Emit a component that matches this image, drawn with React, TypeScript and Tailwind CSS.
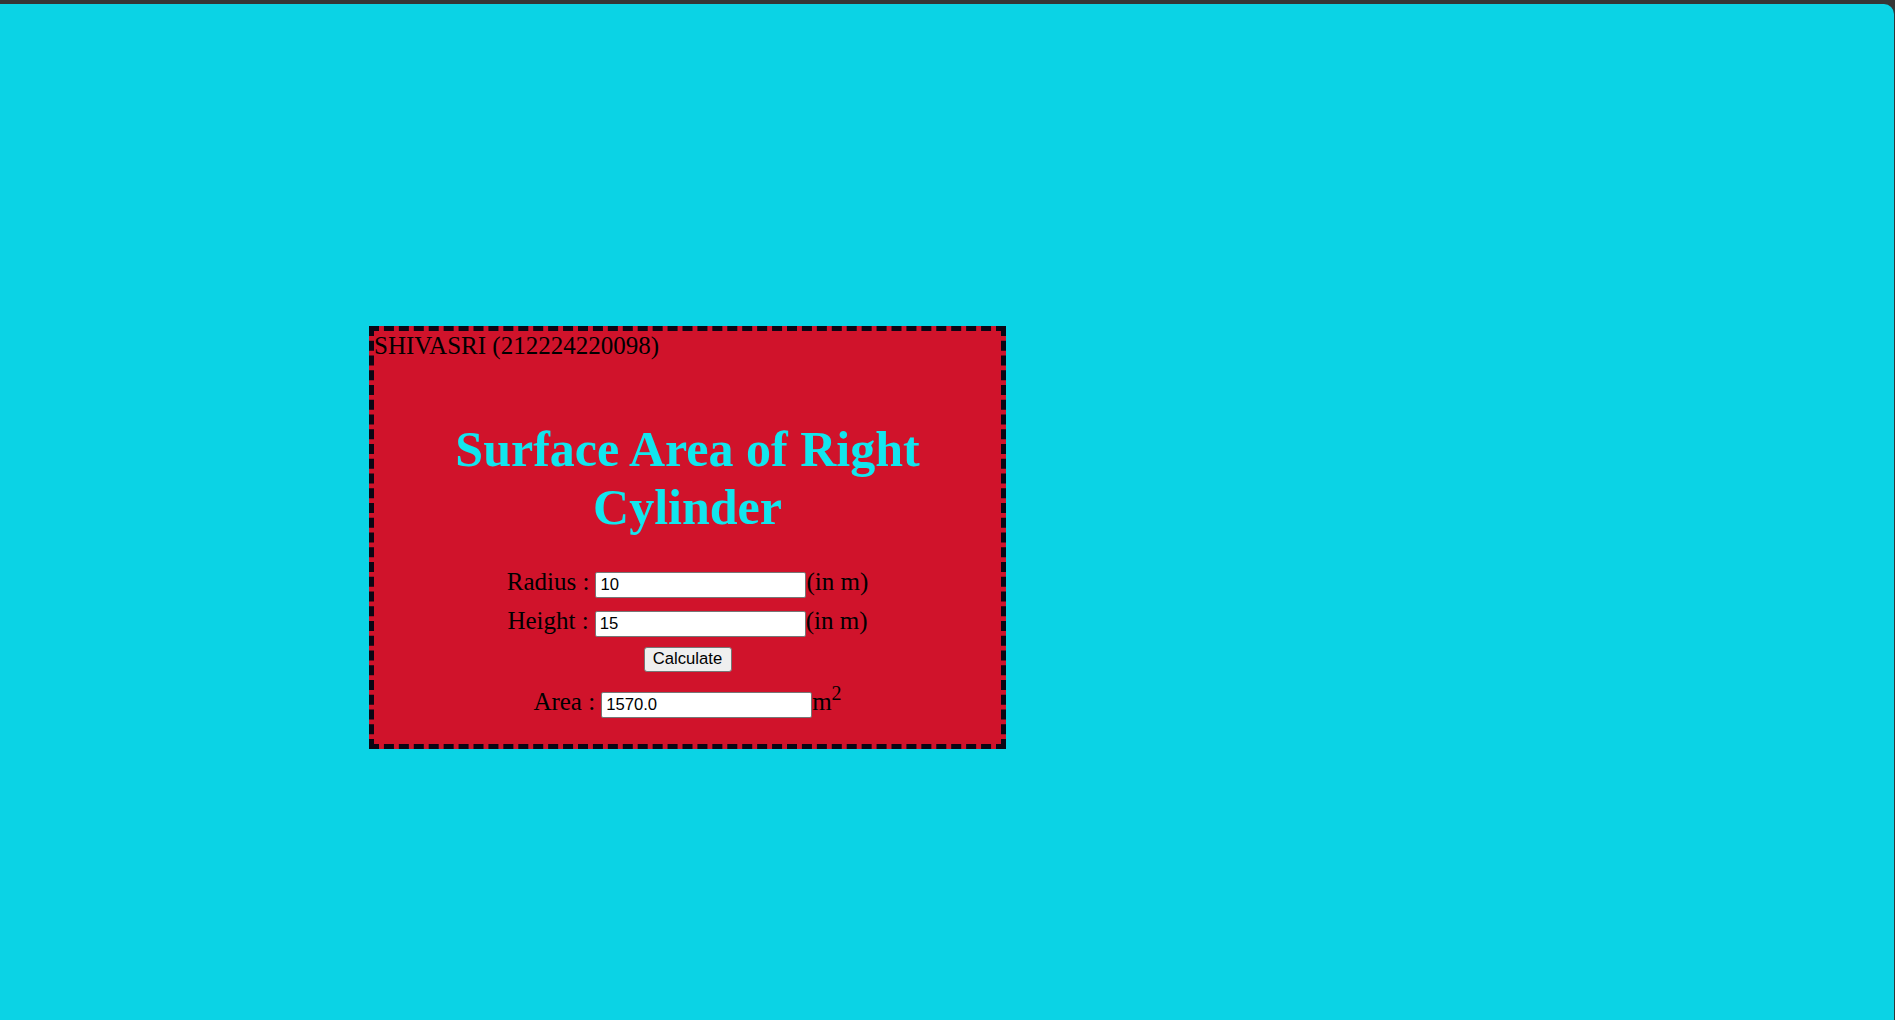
// Surface Area of Right Cylinder — calculator card on a cyan page
import { useState } from 'react'

const serif = "font-['Liberation_Serif','Times_New_Roman',serif]"
const sans = "font-['Liberation_Sans',Arial,sans-serif]"

function Field({
  label,
  value,
  onChange,
  suffix,
  className = '',
}: {
  label: string
  value: string
  onChange?: (v: string) => void
  suffix: React.ReactNode
  className?: string
}) {
  return (
    <div className={`flex h-[26px] items-baseline justify-center ${className}`}>
      <span className="pr-[6px] leading-[19px]">{label}</span>
      <input
        type="text"
        value={value}
        readOnly={!onChange}
        onChange={(e) => onChange?.(e.target.value)}
        className={`h-[26px] w-[211px] rounded-[2px] border border-[#767676] bg-white pl-[4px] text-[16.67px] text-black outline-none ${sans}`}
      />
      <span className="leading-[19px]">{suffix}</span>
    </div>
  )
}

export default function App() {
  const [radius, setRadius] = useState('10')
  const [height, setHeight] = useState('15')
  const [area, setArea] = useState('1570.0')

  const calculate = () => {
    const r = parseFloat(radius) || 0
    const h = parseFloat(height) || 0
    setArea((2 * 3.14 * r * h).toFixed(1))
  }

  return (
    <div className="h-screen w-full bg-[#363636] pt-1 pr-px">
      <div className="h-full rounded-tr-[10px] bg-[#0bd3e5] pt-[322px] pl-[369px]">
        <div
          className={`flex h-[423px] w-[637px] flex-col border-[5px] border-dashed border-[#0a0614] bg-[#d0132b] pt-[1px] text-[25px] text-black ${serif}`}
        >
          <div className="leading-[1.15]">SHIVASRI (212224220098)</div>

          <h1 className="mt-[60.6px] text-center text-[50px] font-bold leading-[1.15] text-[#12e6ee]">
            Surface Area of Right Cylinder
          </h1>

          <Field
            className="mt-[35.6px]"
            label="Radius :"
            value={radius}
            onChange={setRadius}
            suffix="(in m)"
          />
          <Field
            className="mt-[13px]"
            label="Height :"
            value={height}
            onChange={setHeight}
            suffix="(in m)"
          />

          <div className="mt-[10px] flex justify-center">
            <button
              type="button"
              onClick={calculate}
              className={`h-[25px] w-[88px] rounded-[3px] border border-[#767676] bg-[#efefef] text-[16.67px] leading-none text-black ${sans}`}
            >
              Calculate
            </button>
          </div>

          <Field
            className="mt-[20px]"
            label="Area :"
            value={area}
            suffix={
              <>
                m<sup className="text-[20px]">2</sup>
              </>
            }
          />
        </div>
      </div>
    </div>
  )
}
